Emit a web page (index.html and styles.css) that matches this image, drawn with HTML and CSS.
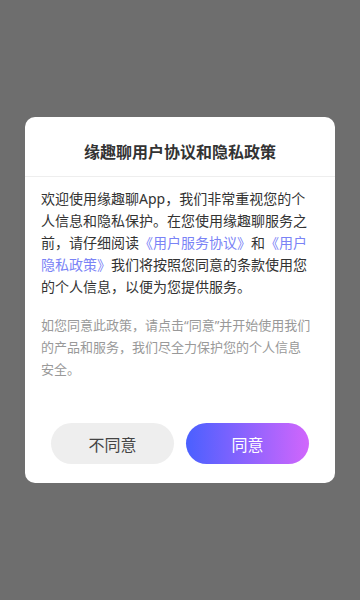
FILE: index.html
```html
<!DOCTYPE html>
<html lang="zh-CN">
<head>
  <meta charset="UTF-8">
  <meta name="viewport" content="width=device-width, initial-scale=1.0">
  <title>用户协议和隐私政策</title>
  <link rel="stylesheet" href="styles.css">
</head>
<body>
  <div class="mask">
    <div class="dialog">
      <h2 class="dialog-title">缘趣聊用户协议和隐私政策</h2>

      <!-- 协议内容 -->
      <div class="dialog-body">
        <p class="intro">欢迎使用缘趣聊App，我们非常重视您的个人信息和隐私保护。在您使用缘趣聊服务之前，请仔细阅读<a href="#">《用户服务协议》</a>和<a href="#">《用户隐私政策》</a>我们将按照您同意的条款使用您的个人信息，以便为您提供服务。</p>
        <p class="tip">如您同意此政策，请点击“同意”并开始使用我们的产品和服务，我们尽全力保护您的个人信息安全。</p>
      </div>

      <div class="dialog-actions">
        <button class="btn btn-cancel">不同意</button>
        <button class="btn btn-ok">同意</button>
      </div>
    </div>
  </div>
</body>
</html>
```

FILE: styles.css
```css
body {
  margin: 0;
  padding: 0;
  font-family: "Noto Sans", "Noto Sans CJK SC", sans-serif;
  background-color: #6e6e6e;
}
.mask {
  height: 600px;
  display: flex;
  align-items: center;
  justify-content: center;
}
.dialog {
  width: 310px;
  background-color: #fff;
  border-radius: 10px;
  padding-bottom: 19px;
}
.dialog-title {
  margin: 0;
  padding: 25px 0 14px;
  font-size: 16px;
  line-height: 20px;
  font-weight: bold;
  text-align: center;
  color: #333;
  border-bottom: 1px solid #eee;
}
.dialog-body {
  padding: 11px 16px 0;
}
.dialog-body p {
  margin: 0;
  line-height: 22px;
}
.intro {
  font-size: 14px;
  color: #333;
}
.intro a {
  color: #7a83f6;
  text-decoration: none;
}
.dialog-body .tip {
  margin: 16px 6px 0 0;
  font-size: 13px;
  color: #999;
}
.dialog-actions {
  display: flex;
  justify-content: center;
  gap: 12px;
  margin-top: 43px;
}
.btn {
  width: 123px;
  height: 41px;
  border: none;
  border-radius: 21px;
  font-family: inherit;
  font-size: 16px;
  cursor: pointer;
}
.btn-cancel {
  background-color: #eee;
  color: #444;
}
.btn-ok {
  background: linear-gradient(to right, #4a60ff, #d166fc);
  color: #fff;
}
```
